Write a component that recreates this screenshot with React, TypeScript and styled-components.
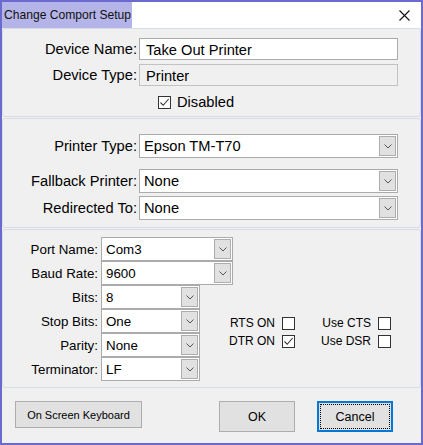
import React from "react";
import styled, { createGlobalStyle } from "styled-components";

const GlobalStyle = createGlobalStyle`
  * { box-sizing: border-box; }
  body {
    margin: 0;
    font-family: "Liberation Sans", Arial, sans-serif;
    color: #000;
  }
`;

const Window = styled.div`
  width: 423px;
  height: 445px;
  border: 2px solid #6b6bcf;
  background: #f0f0f0;
  display: flex;
  flex-direction: column;
`;

const TitleBar = styled.div`
  height: 26px;
  background: #fff;
  display: flex;
  align-items: stretch;
  flex-shrink: 0;
`;

const TitleTab = styled.div`
  min-width: 128px;
  background: #b4b4e8;
  display: flex;
  align-items: center;
  padding: 0 1px 0 2px;
  font-size: 12.1px;
  color: #111;
  white-space: nowrap;
`;

const CloseBtn = styled.div`
  margin-left: auto;
  width: 36px;
  display: flex;
  align-items: center;
  justify-content: center;
  padding-left: 2px;
  padding-top: 1px;
`;

const Panel = styled.div<{ $pt: number; $pb: number; $mt?: number; $fs: number }>`
  border: 1px solid #d6dde6;
  border-radius: 3px;
  margin-top: ${(p) => p.$mt ?? 0}px;
  padding-top: ${(p) => p.$pt}px;
  padding-bottom: ${(p) => p.$pb}px;
  font-size: ${(p) => p.$fs}px;
`;

const FormGrid = styled.div<{ $label: number; $gap: number; $rowGap?: number }>`
  display: grid;
  grid-template-columns: ${(p) => p.$label}px auto;
  column-gap: ${(p) => p.$gap}px;
  row-gap: ${(p) => p.$rowGap ?? 0}px;
  align-items: center;
  justify-content: start;
`;

const Label = styled.div<{ $mt?: number }>`
  text-align: right;
  white-space: nowrap;
  margin-top: ${(p) => p.$mt ?? 0}px;
`;

const TextBox = styled.div<{ $disabled?: boolean }>`
  width: 259px;
  height: 22px;
  border: 1px solid ${(p) => (p.$disabled ? "#c2c2c2" : "#ababab")};
  background: ${(p) => (p.$disabled ? "#f0f0f0" : "#fff")};
  display: flex;
  align-items: center;
  padding-left: 6px;
  padding-top: 1px;
`;

const Combo = styled.div<{ $w: number; $h: number; $mt?: number }>`
  width: ${(p) => p.$w}px;
  height: ${(p) => p.$h}px;
  margin-top: ${(p) => p.$mt ?? 0}px;
  border: 1px solid #ababab;
  background: #fff;
  display: flex;
  align-items: stretch;
  padding: 1px;
`;

const ComboText = styled.div`
  flex: 1;
  display: flex;
  align-items: center;
  padding-left: 3px;
  white-space: nowrap;
`;

const ArrowBtn = styled.div`
  width: 17px;
  background: #e1e1e1;
  border: 1px solid #adadad;
  display: flex;
  align-items: center;
  justify-content: center;
`;

const CheckRow = styled.div<{ $pl: number }>`
  grid-column: 2;
  display: flex;
  align-items: center;
  gap: 6px;
  padding-left: ${(p) => p.$pl}px;
  height: 16px;
  margin-top: 4px;
`;

const Box = styled.div`
  width: 13px;
  height: 13px;
  border: 1px solid #333;
  background: #fff;
  display: flex;
  align-items: center;
  justify-content: center;
  flex-shrink: 0;
`;

const PortArea = styled.div`
  display: flex;
  align-items: flex-start;
`;

const Flags = styled.div`
  display: grid;
  grid-template-columns: 62px 96px;
  grid-auto-rows: 18px;
  margin-top: 77px;
  font-size: 12px;
`;

const Flag = styled.div`
  display: flex;
  align-items: center;
  justify-content: flex-end;
  gap: 7px;
  white-space: nowrap;
`;

const Footer = styled.div`
  display: flex;
  align-items: flex-start;
  padding: 13px 28px 0 13px;
`;

const Button = styled.div<{ $w: number; $h: number; $fs: number; $focus?: boolean; $ml?: number }>`
  width: ${(p) => p.$w}px;
  height: ${(p) => p.$h}px;
  margin-left: ${(p) => p.$ml ?? 0}px;
  background: #e1e1e1;
  border: ${(p) => (p.$focus ? "2px solid #0078d7" : "1px solid #adadad")};
  display: flex;
  align-items: center;
  justify-content: center;
  font-size: ${(p) => p.$fs}px;
  white-space: nowrap;
  outline: ${(p) => (p.$focus ? "1px dotted #000" : "none")};
  outline-offset: -4px;
`;

const Chevron = () => (
  <svg width="8" height="5" viewBox="0 0 8 5">
    <path d="M0.5 0.5 L4 4 L7.5 0.5" fill="none" stroke="#555" strokeWidth="1" />
  </svg>
);

const Check = () => (
  <svg width="11" height="11" viewBox="0 0 11 11">
    <path d="M1.5 5.5 L4.2 8.3 L9.6 2" fill="none" stroke="#333" strokeWidth="1.1" />
  </svg>
);

function ComboBox({ value, w, h = 24, mt }: { value: string; w: number; h?: number; mt?: number }) {
  return (
    <Combo $w={w} $h={h} $mt={mt}>
      <ComboText>{value}</ComboText>
      <ArrowBtn>
        <Chevron />
      </ArrowBtn>
    </Combo>
  );
}

function CheckBox({ checked }: { checked?: boolean }) {
  return <Box>{checked && <Check />}</Box>;
}

const portRows: { label: string; value: string; w: number }[] = [
  { label: "Port Name:", value: "Com3", w: 132 },
  { label: "Baud Rate:", value: "9600", w: 132 },
  { label: "Bits:", value: "8", w: 99 },
  { label: "Stop Bits:", value: "One", w: 99 },
  { label: "Parity:", value: "None", w: 99 },
  { label: "Terminator:", value: "LF", w: 99 },
];

export default function App() {
  return (
    <>
      <GlobalStyle />
      <Window>
        <TitleBar>
          <TitleTab>Change Comport Setup</TitleTab>
          <CloseBtn>
            <svg width="11" height="11" viewBox="0 0 11 11">
              <path d="M0.5 0.5 L10.5 10.5 M10.5 0.5 L0.5 10.5" stroke="#111" strokeWidth="1.1" />
            </svg>
          </CloseBtn>
        </TitleBar>

        <Panel $pt={9} $pb={6} $fs={14.67}>
          <FormGrid $label={134} $gap={2} $rowGap={4}>
            <Label>Device Name:</Label>
            <TextBox>Take Out Printer</TextBox>
            <Label>Device Type:</Label>
            <TextBox $disabled>Printer</TextBox>
            <CheckRow $pl={19}>
              <CheckBox checked />
              <span>Disabled</span>
            </CheckRow>
          </FormGrid>
        </Panel>

        <Panel $pt={15} $pb={7} $mt={1} $fs={14.67}>
          <FormGrid $label={134} $gap={2}>
            <Label>Printer Type:</Label>
            <ComboBox value="Epson TM-T70" w={259} />
            <Label $mt={11}>Fallback Printer:</Label>
            <ComboBox value="None" w={259} mt={11} />
            <Label $mt={3}>Redirected To:</Label>
            <ComboBox value="None" w={259} mt={3} />
          </FormGrid>
        </Panel>

        <Panel $pt={7} $pb={6} $mt={1} $fs={13.33}>
          <PortArea>
            <FormGrid $label={95} $gap={3}>
              {portRows.map((r) => (
                <React.Fragment key={r.label}>
                  <Label>{r.label}</Label>
                  <ComboBox value={r.value} w={r.w} />
                </React.Fragment>
              ))}
            </FormGrid>
            <Flags>
              <Flag>
                RTS ON <CheckBox />
              </Flag>
              <Flag>
                Use CTS <CheckBox />
              </Flag>
              <Flag>
                DTR ON <CheckBox checked />
              </Flag>
              <Flag>
                Use DSR <CheckBox />
              </Flag>
            </Flags>
          </PortArea>
        </Panel>

        <Footer>
          <Button $w={127} $h={27} $fs={11}>
            On Screen Keyboard
          </Button>
          <Button $w={76} $h={31} $fs={12.5} $ml={77}>
            OK
          </Button>
          <Button $w={76} $h={31} $fs={12.5} $ml={22} $focus>
            Cancel
          </Button>
        </Footer>
      </Window>
    </>
  );
}
